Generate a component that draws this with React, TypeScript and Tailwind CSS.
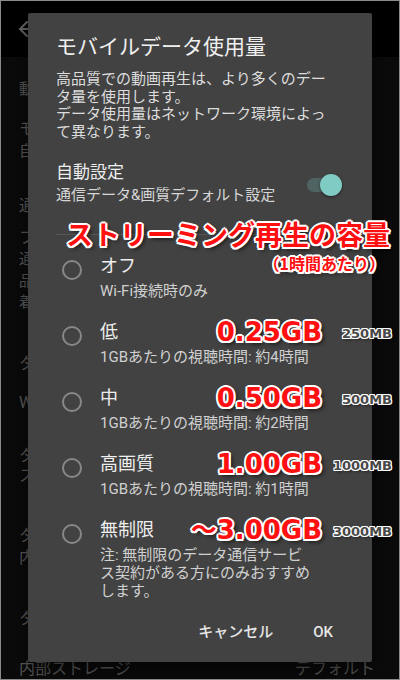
import { ArrowLeft } from "lucide-react";

const redOutline =
  "text-[#ff1010] [text-shadow:2px_0_0_#fff,-2px_0_0_#fff,0_2px_0_#fff,0_-2px_0_#fff,1.5px_1.5px_0_#fff,-1.5px_-1.5px_0_#fff,1.5px_-1.5px_0_#fff,-1.5px_1.5px_0_#fff,3px_3px_4px_rgba(0,0,0,0.7)]";
const mbOutline =
  "text-[#484848] [text-shadow:1px_0_0_#fff,-1px_0_0_#fff,0_1px_0_#fff,0_-1px_0_#fff,1px_1px_0_#fff,-1px_-1px_0_#fff,1px_-1px_0_#fff,-1px_1px_0_#fff,2px_2px_3px_rgba(0,0,0,0.6)]";

type Option = {
  label: string;
  sub: string[];
  gb?: string;
  mb?: string;
};

const options: Option[] = [
  { label: "オフ", sub: ["Wi-Fi接続時のみ"] },
  { label: "低", sub: ["1GBあたりの視聴時間: 約4時間"], gb: "0.25GB", mb: "250MB" },
  { label: "中", sub: ["1GBあたりの視聴時間: 約2時間"], gb: "0.50GB", mb: "500MB" },
  { label: "高画質", sub: ["1GBあたりの視聴時間: 約1時間"], gb: "1.00GB", mb: "1000MB" },
  {
    label: "無制限",
    sub: ["注: 無制限のデータ通信サービ", "ス契約がある方にのみおすすめ", "します。"],
    gb: "～3.00GB",
    mb: "3000MB",
  },
];

function Toggle() {
  return (
    <div className="relative w-[35px] h-[22px] mr-[6px] mt-[4px] shrink-0">
      <div className="absolute left-0 top-[4px] w-[28px] h-[14px] rounded-full bg-[#4f6462]" />
      <div className="absolute right-0 top-0 w-[22px] h-[22px] rounded-full bg-[#80cbc4] shadow-[0_1px_3px_rgba(0,0,0,0.5)]" />
    </div>
  );
}

function Background() {
  return (
    <div className="text-[#5e5e5e] text-[16px] leading-[22px]">
      <div className="h-[56px] bg-black flex items-center pl-[14px]">
        <ArrowLeft className="w-6 h-6 text-[#666]" />
      </div>
      <div className="px-[18px]">
        <div className="mt-[21px] text-[15px]">動画の品質</div>
        <div className="mt-[18px]">モバイルデータ使用量</div>
        <div className="text-[15px]">自動設定</div>
        <div className="mt-[33px]">通信環境</div>
        <div className="mt-[10px]">フル画質</div>
        <div className="text-[15px] leading-[21.5px]">
          通信量が多くなります
          <br />
          品質を優先
          <br />
          着信時
        </div>
        <div className="mt-[39px]">タイムライン</div>
        <div className="mt-[17px]">Wi-Fi</div>
        <div className="mt-[32px] leading-[20px]">
          タイトル
          <br />
          ストリーミング
        </div>
        <div className="mt-[39px]">
          タイトル
          <br />
          内容
        </div>
        <div className="mt-[39px]">タイトル</div>
        <div className="mt-[28px] flex justify-between">
          <span>内部ストレージ</span>
          <span className="mr-[6px]">デフォルト</span>
        </div>
      </div>
    </div>
  );
}

export default function App() {
  return (
    <div className="relative w-[400px] h-[680px] overflow-hidden bg-[#0b0b0b] border border-[#8a8a8a] font-['Roboto','Noto_Sans_CJK_JP',sans-serif]">
      <Background />

      {/* Dialog */}
      <div className="absolute left-[27px] top-[12px] w-[344px] h-[649px] bg-[#424242] rounded-[2px] shadow-[0_8px_24px_rgba(0,0,0,0.6)] pl-[28px] pr-[24px] pt-[20px] flex flex-col">
        <h2 className="text-[21px] leading-[28px] text-[#f0f0f0]">モバイルデータ使用量</h2>
        <p className="mt-[10px] text-[15px] leading-[17.7px] text-[#dddddd]">
          高品質での動画再生は、より多くのデー
          <br />
          タ量を使用します。
          <br />
          データ使用量はネットワーク環境によっ
          <br />
          て異なります。
        </p>

        <div className="mt-[19px] flex items-center">
          <div className="flex-1">
            <div className="text-[17px] leading-[22px] text-[#eeeeee]">自動設定</div>
            <div className="mt-[2px] text-[15px] leading-[20px] text-[#d6d6d6]">
              通信データ&amp;画質デフォルト設定
            </div>
          </div>
          <Toggle />
        </div>

        <div className="mt-[29px] h-px bg-[#575757] mr-[-24px]" />

        <div className="mt-[18px] flex flex-col gap-[19px]">
          {options.map((o) => (
            <div key={o.label} className="flex items-start">
              <div className="w-[44px] shrink-0">
                <div className="mt-[7px] ml-[6px] w-[20px] h-[20px] rounded-full border-2 border-[#888888]" />
              </div>
              <div className="flex-1">
                <div className="h-[26px] flex items-center mr-[-44px]">
                  <span className="flex-1 text-[18px] leading-[26px] text-[#eeeeee]">{o.label}</span>
                  {o.gb && (
                    <span
                      className={`font-['DejaVu_Sans','Noto_Sans_CJK_JP',sans-serif] font-bold text-[26px] leading-[26px] ${redOutline}`}
                    >
                      {o.gb}
                    </span>
                  )}
                  {o.mb && (
                    <span
                      className={`w-[70px] text-right translate-y-[2px] font-['DejaVu_Sans',sans-serif] font-bold text-[13px] leading-[26px] ${mbOutline}`}
                    >
                      {o.mb}
                    </span>
                  )}
                </div>
                <div className="mt-[3px] text-[15px] leading-[18px] text-[#d0d0d0]">
                  {o.sub.map((s, i) => (
                    <div key={i}>{s}</div>
                  ))}
                </div>
              </div>
            </div>
          ))}
        </div>

        <div className="mt-auto mb-[6px] h-[48px] flex items-center justify-end gap-[10px] mr-[-24px] pr-[24px]">
          <button className="px-[15px] text-[15px] font-medium text-[#e6e6e6]">キャンセル</button>
          <button className="px-[15px] text-[15px] font-medium text-[#e6e6e6]">OK</button>
        </div>
      </div>

      {/* Annotation */}
      <div className="absolute right-[9px] top-[215px] flex flex-col items-end font-['Noto_Sans_CJK_JP',sans-serif] font-bold">
        <div className={`text-[27px] leading-[36px] ${redOutline}`}>ストリーミング再生の容量</div>
        <div className={`mr-[5px] text-[16px] leading-[22px] ${redOutline}`}>（1時間あたり）</div>
      </div>
    </div>
  );
}
